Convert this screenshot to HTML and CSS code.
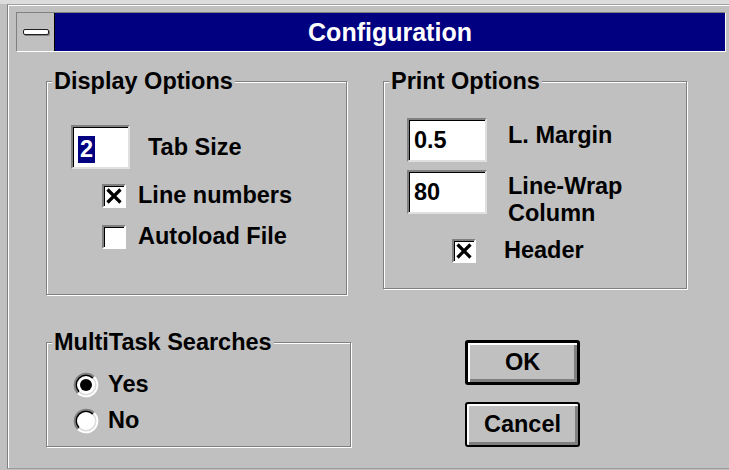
FILE: index.html
```html
<!DOCTYPE html>
<html lang="en">
<head>
<meta charset="utf-8">
<title>Configuration</title>
<link rel="stylesheet" href="styles.css">
</head>
<body>
<div class="window">
  <div class="titlebar">
    <div class="sysmenu"><span class="sysmenu-bar"></span></div>
    <div class="caption">Configuration</div>
  </div>

  <div class="client">
    <fieldset class="group group-display">
      <legend>Display Options</legend>
      <div class="group-body display-body">
        <div class="edit-row">
          <span class="edit edit-narrow"><span class="sel">2</span></span>
          <span class="label">Tab Size</span>
        </div>
        <div class="check-row">
          <span class="check">
            <svg viewBox="0 0 20 20" width="20" height="20"><path d="M3.5 3.5 L16.5 16.5 M16.5 3.5 L3.5 16.5" stroke="#000" stroke-width="3.2" fill="none"/></svg>
          </span>
          <span class="label">Line numbers</span>
        </div>
        <div class="check-row">
          <span class="check"></span>
          <span class="label">Autoload File</span>
        </div>
      </div>
    </fieldset>

    <fieldset class="group group-print">
      <legend>Print Options</legend>
      <div class="group-body print-body">
        <div class="edit-row top">
          <span class="edit edit-wide">0.5</span>
          <span class="label">L. Margin</span>
        </div>
        <div class="edit-row top second">
          <span class="edit edit-wide">80</span>
          <span class="label">Line-Wrap<br>Column</span>
        </div>
        <div class="check-row header-row">
          <span class="check">
            <svg viewBox="0 0 20 20" width="20" height="20"><path d="M3.5 3.5 L16.5 16.5 M16.5 3.5 L3.5 16.5" stroke="#000" stroke-width="3.2" fill="none"/></svg>
          </span>
          <span class="label">Header</span>
        </div>
      </div>
    </fieldset>

    <fieldset class="group group-multitask">
      <legend>MultiTask Searches</legend>
      <div class="group-body multitask-body">
        <div class="radio-row">
          <svg class="radio" viewBox="0 0 26 26" width="26" height="26">
            <circle cx="13" cy="13" r="11.5" fill="#fff"/>
            <path d="M4.87 21.13 A11.5 11.5 0 0 1 21.13 4.87" stroke="#808080" stroke-width="2" fill="none"/>
            <path d="M21.13 4.87 A11.5 11.5 0 0 1 4.87 21.13" stroke="#fff" stroke-width="2" fill="none"/>
            <path d="M6.1 19.9 A9.75 9.75 0 0 1 19.9 6.1" stroke="#000" stroke-width="1.5" fill="none"/>
            <path d="M19.9 6.1 A9.75 9.75 0 0 1 6.1 19.9" stroke="#dcdcdc" stroke-width="1.5" fill="none"/>
            <circle cx="13" cy="13" r="6" fill="#000"/>
          </svg>
          <span class="label">Yes</span>
        </div>
        <div class="radio-row">
          <svg class="radio" viewBox="0 0 26 26" width="26" height="26">
            <circle cx="13" cy="13" r="11.5" fill="#fff"/>
            <path d="M4.87 21.13 A11.5 11.5 0 0 1 21.13 4.87" stroke="#808080" stroke-width="2" fill="none"/>
            <path d="M21.13 4.87 A11.5 11.5 0 0 1 4.87 21.13" stroke="#fff" stroke-width="2" fill="none"/>
            <path d="M6.1 19.9 A9.75 9.75 0 0 1 19.9 6.1" stroke="#000" stroke-width="1.5" fill="none"/>
            <path d="M19.9 6.1 A9.75 9.75 0 0 1 6.1 19.9" stroke="#dcdcdc" stroke-width="1.5" fill="none"/>
          </svg>
          <span class="label">No</span>
        </div>
      </div>
    </fieldset>

    <div class="buttons">
      <button class="btn btn-default" type="button">OK</button>
      <button class="btn" type="button">Cancel</button>
    </div>
  </div>
</div>
</body>
</html>
```

FILE: styles.css
```css
* {
  box-sizing: border-box;
}

html,
body {
  margin: 0;
  height: 100%;
}

body {
  background: #c0c0c0;
  border-top: 4px solid #dcdcdc;
  overflow: hidden;
  font: bold 23.5px/27px "Liberation Sans", Arial, sans-serif;
  color: #000;
}

/* dialog frame */
.window {
  margin-left: 7px;
  width: 730px;
  height: 465px;
  border-top: 1px solid #a0a0a0;
  border-left: 1px solid #808080;
  border-bottom: 1px solid #9a9a9a;
  box-shadow: inset 1px 1px 0 #fff;
}

/* caption bar */
.titlebar {
  display: flex;
  width: 710px;
  height: 40px;
  margin: 7px 0 0 8px;
  border: 1px solid;
  border-color: #808080 #fff #fff #808080;
}

.sysmenu {
  width: 38px;
  background: #c0c0c0;
  border-right: 1px solid #000;
  display: flex;
  align-items: center;
  padding-left: 6px;
}

.sysmenu-bar {
  width: 26px;
  height: 6px;
  background: #fff;
  border: 1px solid #202020;
  border-radius: 2px;
  box-shadow: 1px 1px 0 #808080;
}

.caption {
  flex: 1;
  background: #000080;
  color: #fff;
  text-align: center;
  font-size: 25px;
  line-height: 38px;
}

/* dialog body */
.client {
  display: grid;
  grid-template-columns: 305px 304px;
  column-gap: 32px;
  row-gap: 34px;
  align-items: start;
  padding: 16px 0 0 38px;
}

.group {
  margin: 0;
  padding: 0;
  min-width: 0;
  border: 1px solid #808080;
  box-shadow: inset 1px 1px 0 #fff, 1px 1px 0 #fff;
}

.group legend {
  margin-left: 5px;
  padding: 0 2px;
  background: #c0c0c0;
  line-height: 27px;
}

.group-display {
  width: 301px;
}

.group-print {
  width: 304px;
}

.group-multitask {
  width: 305px;
}

.group-body {
  display: flex;
  flex-direction: column;
}

.display-body {
  padding: 30px 0 44px 24px;
}

.print-body {
  padding: 23px 0 24px 23px;
}

.multitask-body {
  padding: 15px 0 12px 26px;
}

.label {
  white-space: nowrap;
}

/* edit fields */
.edit-row {
  display: flex;
  align-items: center;
  gap: 18px;
}

.edit-row.top {
  align-items: flex-start;
  gap: 21px;
}

.edit-row.top .label {
  margin-top: 4px;
}

.edit-row.second {
  margin-top: 8px;
}

.edit-row.second .label {
  margin-top: 3px;
}

.edit {
  height: 44px;
  background: #fff;
  border: 2px solid;
  border-color: #808080 #e0e0e0 #e0e0e0 #808080;
  box-shadow: inset 1px 1px 0 #000;
  display: flex;
  align-items: center;
  padding-left: 5px;
}

.edit-narrow {
  width: 59px;
}

.edit-wide {
  width: 80px;
}

.sel {
  background: #000080;
  color: #fff;
  padding: 0 2px;
  margin-top: 4px;
}

/* check boxes */
.check-row {
  display: flex;
  align-items: center;
  gap: 12px;
  margin-left: 31px;
  margin-top: 13px;
}

.check-row + .check-row {
  margin-top: 14px;
}

.header-row {
  margin-left: 45px;
  margin-top: 10px;
  gap: 28px;
}

.check {
  width: 24px;
  height: 24px;
  flex: none;
  background: #fff;
  border: 2px solid;
  border-color: #808080 #fff #fff #808080;
  box-shadow: inset 1px 1px 0 #000;
  display: flex;
}

.check svg {
  display: block;
}

/* radio buttons */
.radio-row {
  display: flex;
  align-items: center;
  gap: 9px;
}

.radio-row + .radio-row {
  margin-top: 9px;
}

.radio {
  display: block;
  flex: none;
}

/* push buttons */
.buttons {
  display: flex;
  flex-direction: column;
  gap: 17px;
  margin: 11px 0 0 82px;
}

.btn {
  width: 115px;
  height: 45px;
  padding: 0;
  background: #c0c0c0;
  border: 2px solid #000;
  border-radius: 3px;
  box-shadow: inset 2px 2px 0 #fff, inset -3px -3px 0 #808080;
  font: inherit;
  color: #000;
  display: flex;
  align-items: center;
  justify-content: center;
}

.btn-default {
  border-width: 3px;
}
```
